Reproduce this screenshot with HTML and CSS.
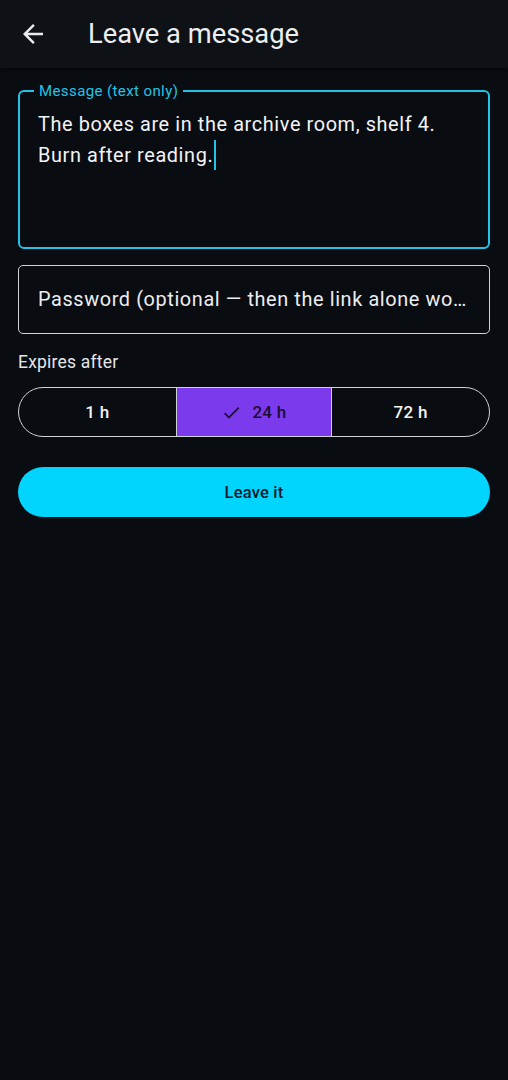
FILE: index.html
```html
<!DOCTYPE html>
<html>
<head>
<link rel="stylesheet" href="styles.css">
</head>
<body>

<div class="appbar">
	<svg class="back" viewBox="0 0 24 24"><path d="M20 11H7.83l5.59-5.59L12 4l-8 8 8 8 1.41-1.41L7.83 13H20v-2z" fill="#e8eaed"/></svg>
	<h1>Leave a message</h1>
</div>

<div class="content">
	<fieldset class="message">
		<legend>Message (text only)</legend>
		<div class="msgtext">The boxes are in the archive room, shelf 4.<br>Burn after reading.<span class="cursor"></span></div>
	</fieldset>

	<div class="password">Password (optional — then the link alone wo…</div>

	<div class="label">Expires after</div>

	<div class="segments">
		<div class="seg">1 h</div>
		<div class="seg selected"><svg class="check" viewBox="0 0 24 24"><path d="M9 16.17L4.83 12l-1.42 1.41L9 19 21 7l-1.41-1.41z" fill="#1a0b33"/></svg>24 h</div>
		<div class="seg">72 h</div>
	</div>

	<div class="submit">Leave it</div>
</div>

</body>
</html>
```

FILE: styles.css
```css
body {
	margin:0;
	background-color:#090c10;
	font-family:Roboto, sans-serif;
	color:#eceef1;
}
.appbar {
	height:68px;
	display:flex;
	align-items:center;
	background-color:#0e1116;
	box-shadow:0 2px 4px rgba(0, 0, 0, 0.4);
}
.appbar .back {
	width:30px;
	height:30px;
	margin-left:18px;
	margin-right:40px;
}
.appbar h1 {
	margin:0;
	font-size:27.3px;
	font-weight:400;
	color:#eceef1;
}
.content {
	padding:14px 18px;
}
fieldset.message {
	margin:0;
	padding:9px 18px 0 18px;
	border:2px solid #22c3e6;
	border-radius:6px;
	box-sizing:border-box;
	height:167px;
}
fieldset.message legend {
	font-size:15px;
	color:#22c3e6;
	padding:0 5px;
	margin-left:-4px;
	letter-spacing:0.4px;
}
.msgtext {
	font-size:19.9px;
	line-height:31px;
	letter-spacing:0.6px;
	color:#f2f3f5;
}
.cursor {
	display:inline-block;
	width:2px;
	height:30px;
	background-color:#22c3e6;
	vertical-align:-8px;
	margin-left:1px;
}
.password {
	margin-top:16px;
	height:69px;
	box-sizing:border-box;
	border:1px solid #cfd2d6;
	border-radius:5px;
	padding:0 19px;
	display:flex;
	align-items:center;
	font-size:19.9px;
	letter-spacing:0.6px;
	white-space:nowrap;
	overflow:hidden;
	color:#eceef1;
}
.label {
	margin-top:18px;
	font-size:17.5px;
	letter-spacing:0.2px;
	color:#e4e6ea;
}
.segments {
	margin-top:15px;
	height:50px;
	display:grid;
	grid-template-columns:1fr 1fr 1fr;
	border:1px solid #cfd2d6;
	border-radius:25px;
	overflow:hidden;
	box-sizing:border-box;
}
.seg {
	display:flex;
	align-items:center;
	justify-content:center;
	font-size:17px;
	font-weight:500;
	letter-spacing:0.3px;
	color:#f2f3f5;
}
.seg.selected {
	background-color:#7c3aed;
	color:#1a0b33;
	border-left:1px solid #cfd2d6;
	border-right:1px solid #cfd2d6;
}
.check {
	width:21px;
	height:21px;
	margin-right:10px;
}
.submit {
	margin-top:30px;
	height:50px;
	border-radius:25px;
	background-color:#00d4ff;
	display:flex;
	align-items:center;
	justify-content:center;
	font-size:16.5px;
	font-weight:500;
	color:#0b1a24;
	letter-spacing:0.2px;
}
```
